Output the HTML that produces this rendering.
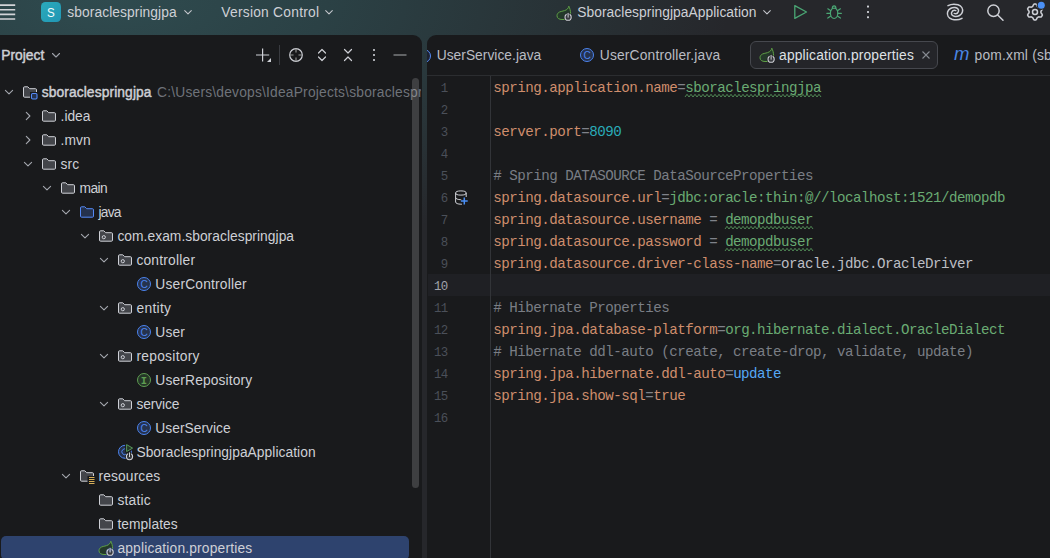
<!DOCTYPE html>
<html lang="en"><head><meta charset="utf-8"><title>sboraclespringjpa – application.properties</title>
<style>
html,body{margin:0;padding:0}
body{width:1050px;height:558px;overflow:hidden;position:relative;background:#26282b;font-family:"Liberation Sans",sans-serif;font-size:13.800px;color:#ced0d6;letter-spacing:.05px}
.bgg{position:absolute;left:0;top:0;width:1050px;height:558px;background:
 radial-gradient(ellipse 620px 260px at 110px 0px, #2f4b4f 0%, #2b4145 35%, rgba(38,40,44,0) 100%), #26272b}
.tb{position:absolute;left:0;top:0;width:1050px;height:35px}
.tb span,.hd span,.tabs span{position:absolute;white-space:nowrap}
.tb svg,.hd svg,.tabs svg{position:absolute;overflow:visible}
.proj{position:absolute;left:0;top:35px;width:422px;height:523px;background:#191a1c;border-top-right-radius:9px;overflow:hidden}
.ed{position:absolute;left:427px;top:35px;width:623px;height:523px;background:#191a1c;border-top-left-radius:9px;overflow:hidden}
.hd{position:absolute;left:0;top:0;width:422px;height:40px}
.row{position:absolute;left:0;width:440px;height:24px}
.row.sel{background:#2e436e;border-radius:5px;left:1px;width:408px}
.row.sel>span{margin-left:-1px}
.row span{position:absolute;white-space:nowrap}
.cv{top:4px;width:16px;height:16px}
.icw{top:4px;width:16px;height:16px}
.ic,.chev{width:16px;height:16px;display:block;overflow:visible}
.lbl{top:.5px;line-height:24px}
b{font-weight:400;-webkit-text-stroke:.45px currentColor;position:static}
.path{position:static!important;color:#6f737a;margin-left:5.400px;letter-spacing:.2px}
.rowclip{position:absolute;left:0;top:0;width:421px;height:558px;overflow:hidden}
.thumb{position:absolute;left:412px;top:43px;width:7px;height:410px;border-radius:4px;background:rgba(255,255,255,.165)}
.tabs{position:absolute;left:0;top:0;width:623px;height:40px;border-bottom:1px solid #2b2d30}
.ln{position:absolute;left:0;width:623px;height:22px;font-family:"Liberation Mono",monospace;letter-spacing:0}
.ln.cur{background:linear-gradient(90deg,#191a1c 1px,#1f2024 1px)}
.no{position:absolute;right:602.400px;top:1.700px;line-height:22px;font-size:12.4px;letter-spacing:-.69px;color:#4b5059}
.cur .no{color:#a1a3ab}
.cd{position:absolute;left:66.3px;top:1.2px;line-height:22px;font-size:14.2px;letter-spacing:-.52px;white-space:pre}
.gl{position:absolute;left:63px;top:41px;width:1px;height:482px;background:#323438;z-index:3}
.k{color:#cf8e6d}.e{color:#7f828a}.v{color:#6aab73}.n{color:#2aacb8}.c{color:#7a7e85}.t{color:#bcbec4}.u{color:#56a8f5}
.wv{position:absolute;top:18.300px;height:4px;overflow:visible}
</style></head><body>
<div class="bgg"></div>
<div class="tb">
 <svg style="left:0;top:0" width="20" height="24"><path d="M0 5.100h15.200M0 9.750h15.200M0 14.400h15.200M0 19h15.200" stroke="#d2d4d8" stroke-width="1.600"/></svg>
 <svg style="left:41px;top:2px" width="20" height="20"><defs><linearGradient id="sg" x1="0" y1="0" x2="1" y2="1"><stop offset="0" stop-color="#2baabb"/><stop offset="1" stop-color="#2196b4"/></linearGradient></defs><rect width="20" height="20" rx="4.5" fill="url(#sg)"/><text transform="translate(10 14.900) scale(.86 1)" text-anchor="middle" font-family="Liberation Sans, sans-serif" font-size="13.500" fill="#f2fbfc">S</text></svg>
 <span style="left:67.3px;top:4.5px;line-height:16px"><span class="f" style="letter-spacing:0.077px">sboraclespringjpa</span></span>
 <svg style="left:180px;top:4px" width="16" height="16"><path d="M4.700 6.600 l3.300 3.300 l3.300-3.300" fill="none" stroke="#c4c6cc" stroke-width="1.050" stroke-linecap="round" stroke-linejoin="round"/></svg>
 <span style="left:221.300px;top:4.5px;line-height:16px"><span class="f" style="letter-spacing:0.246px">Version Control</span></span>
 <svg style="left:321px;top:4px" width="16" height="16"><path d="M4.700 6.600 l3.300 3.300 l3.300-3.300" fill="none" stroke="#c4c6cc" stroke-width="1.050" stroke-linecap="round" stroke-linejoin="round"/></svg>
 <span style="left:555.5px;top:4.5px;width:16px;height:16px"><svg class="ic" viewBox="0 0 16 16"><path d="M12.8 1.2 C12.400 3.400 11 4.800 8.600 5.600 C6.500 6.300 3.800 6.400 2.300 7.800 C1.300 8.800 1 9.800 1 10.800 C1 13.200 3.200 14.500 6 14.500 L9 14.500 C12 14.200 14.600 11.700 14.600 8.500 C14.600 5.700 13.800 3.200 12.800 1.200 Z" fill="#24392a" stroke="#5fa047" stroke-width="1" stroke-linejoin="round"/><circle cx="12.100" cy="12.200" r="4.300" fill="#222629"/><circle cx="12.100" cy="12.200" r="3.100" fill="#3a3c40" stroke="#ced0d6" stroke-width="1.100"/><path d="M12.100 7.600v4.300" stroke="#222629" stroke-width="2.800"/><path d="M12.100 8.400v3.700" stroke="#ced0d6" stroke-width="1.100" stroke-linecap="round"/></svg></span>
 <span style="left:577.3px;top:4.5px;line-height:16px"><span class="f" style="letter-spacing:0.046px">SboraclespringjpaApplication</span></span>
 <svg style="left:759px;top:4px" width="16" height="16"><path d="M4.700 6.600 l3.300 3.300 l3.300-3.300" fill="none" stroke="#c4c6cc" stroke-width="1.050" stroke-linecap="round" stroke-linejoin="round"/></svg>
 <svg style="left:792px;top:4px" width="16" height="16"><path d="M2.8 1.6 v12.8 l11.7-6.4 z" fill="none" stroke="#4aa674" stroke-width="1.3" stroke-linejoin="round"/></svg>
 <svg style="left:826px;top:4px" width="16" height="16"><g fill="none" stroke="#4aa674" stroke-width="1.2" stroke-linecap="round"><ellipse cx="8.1" cy="9.3" rx="3.7" ry="5.2"/><path d="M6.3 4.4 a1.8 2.6 0 0 1 3.6 0"/><path d="M4.8 6.7 l-3-1.900 M11.400 6.700 l3-1.900 M4.400 9.300 h-3.600 M11.800 9.300 h3.600 M4.800 12.100 l-3 2 M11.400 12.100 l3 2"/></g></svg>
 <svg style="left:860px;top:4px" width="16" height="16"><rect x="7" y="1.6" width="2" height="2" rx=".6" fill="#ced0d6"/><rect x="7" y="6.900" width="2" height="2" rx=".6" fill="#ced0d6"/><rect x="7" y="12.200" width="2" height="2" rx=".6" fill="#ced0d6"/></svg>
 <svg style="left:946px;top:2.900px" width="18" height="18"><g transform="translate(9 9)" fill="none" stroke="#ced0d6" stroke-width="1.500" stroke-linecap="round"><path d="M-7 -6.3 C-4 -7.900 0 -8 3 -7.200 C6.500 -6.100 8.200 -3 7.400 0 C6.600 3 3 4.800 0 4.400 C-2.800 4 -4 2.400 -3.400 0.600 C-2.800 -1.200 -1 -2 0.800 -1.400"/><path transform="rotate(180)" d="M-7 -6.3 C-4 -7.900 0 -8 3 -7.200 C6.500 -6.100 8.200 -3 7.400 0 C6.600 3 3 4.800 0 4.400 C-2.800 4 -4 2.400 -3.400 0.600 C-2.800 -1.200 -1 -2 0.800 -1.400"/></g></svg>
 <svg style="left:986px;top:3px" width="18" height="18"><circle cx="7.500" cy="7.700" r="5.700" fill="none" stroke="#ced0d6" stroke-width="1.500"/><path d="M11.700 12 l5.300 5.200" stroke="#ced0d6" stroke-width="1.500" stroke-linecap="round"/></svg>
 <svg style="left:1026px;top:3px" width="18" height="18"><path d="M15.0 9.0L14.9 9.8L15.8 10.8L16.4 12.1L15.9 13.0L15.3 13.9L13.9 13.9L12.7 13.8L12.0 14.2L11.3 14.5L10.8 15.8L10.0 16.9L9.0 17.0L8.0 16.9L7.2 15.8L6.7 14.5L6.0 14.2L5.3 13.8L4.1 13.9L2.7 13.9L2.1 13.0L1.6 12.1L2.2 10.8L3.1 9.8L3.0 9.0L3.1 8.2L2.2 7.2L1.6 5.9L2.1 5.0L2.7 4.1L4.1 4.1L5.3 4.2L6.0 3.8L6.7 3.5L7.2 2.2L8.0 1.1L9.0 1.0L10.0 1.1L10.8 2.2L11.3 3.5L12.0 3.8L12.7 4.2L13.9 4.1L15.3 4.1L15.9 5.0L16.4 5.9L15.8 7.2L14.9 8.2Z" fill="none" stroke="#ced0d6" stroke-width="1.500" stroke-linejoin="round"/><circle cx="9" cy="9" r="2.500" fill="none" stroke="#ced0d6" stroke-width="1.500"/><circle cx="15.300" cy="2.300" r="4.600" fill="#27282c"/><circle cx="15.300" cy="2.300" r="3.500" fill="#4a8ff5"/></svg>
</div>
<div class="proj">
 <div class="hd">
  <span style="left:1.2px;top:12.5px;line-height:16px"><b style="letter-spacing:0.016px">Project</b></span>
  <svg style="left:48px;top:12px" width="16" height="16"><path d="M4.5 6.5 l3.5 3.5 l3.5-3.5" fill="none" stroke="#9da0a8" stroke-width="1.1" stroke-linecap="round" stroke-linejoin="round"/></svg>
  <svg style="left:255px;top:12px" width="18" height="16"><path d="M7.600 1.400v13.200M1 8h13.200" stroke="#ced0d6" stroke-width="1.200"/><path d="M16 11v4h-4z" fill="#ced0d6"/></svg>
  <div style="position:absolute;left:279px;top:10px;width:1px;height:20px;background:#393b40"></div>
  <svg style="left:288px;top:12px" width="16" height="16"><circle cx="8" cy="8" r="6.3" fill="none" stroke="#ced0d6" stroke-width="1.2"/><path d="M8 1.500v4M8 10.500v4M1.500 8h4M10.500 8h4" stroke="#9a9c9a" stroke-width="1.1"/></svg>
  <svg style="left:314px;top:12px" width="16" height="16"><path d="M4.500 6 l3.500-3.500 l3.500 3.500M4.500 10 l3.500 3.500 l3.500-3.500" fill="none" stroke="#ced0d6" stroke-width="1.2" stroke-linecap="round" stroke-linejoin="round"/></svg>
  <svg style="left:340px;top:12px" width="16" height="16"><path d="M4.500 2.500 l3.500 3.500 l3.500-3.500M4.500 13.500 l3.500-3.500 l3.500 3.500" fill="none" stroke="#ced0d6" stroke-width="1.2" stroke-linecap="round" stroke-linejoin="round"/></svg>
  <svg style="left:366px;top:12px" width="16" height="16"><circle cx="8" cy="3" r="1.1" fill="#ced0d6"/><circle cx="8" cy="8" r="1.1" fill="#ced0d6"/><circle cx="8" cy="13" r="1.1" fill="#ced0d6"/></svg>
  <svg style="left:392px;top:12px" width="16" height="16"><path d="M1.500 8h13" stroke="#a9abae" stroke-width="1.2"/></svg>
 </div>
 <div class="rowclip" style="top:-35px;left:0">
 <div class="row" style="top:80px"><span class="cv" style="left:1.10px"><svg class="chev" viewBox="0 0 16 16"><path d="M4.4 6.3 l3.6 3.6 l3.6-3.6" fill="none" stroke="#a4a7ae" stroke-width="1.1" stroke-linecap="round" stroke-linejoin="round"/></svg></span><span class="icw" style="left:22.15px"><svg class="ic" viewBox="0 0 16 16"><path d="M1.5 3.900 a1.100 1.100 0 0 1 1.100-1.100 h3.200 l1.900 1.900 h5.700 a1.100 1.100 0 0 1 1.100 1.100 v6.300 a1.100 1.100 0 0 1-1.100 1.100 h-10.800 a1.100 1.100 0 0 1-1.100-1.100 z" fill="#43454a" stroke="#ced0d6" stroke-width="1"/><rect x="8" y="8" width="8" height="8" fill="#191a1c"/><rect x="9.5" y="9.5" width="5.5" height="5.5" rx="1.2" fill="#25324d" stroke="#548af7" stroke-width="1.1"/></svg></span><span class="lbl" style="left:41.65px"><b style="letter-spacing:0.108px">sboraclespringjpa</b><span class="path">C:\Users\devops\IdeaProjects\sboraclespringjpa</span></span></div>
<div class="row" style="top:104px"><span class="cv" style="left:20.05px"><svg class="chev" viewBox="0 0 16 16"><path d="M6.3 4.4 l3.6 3.6 l-3.6 3.6" fill="none" stroke="#a4a7ae" stroke-width="1.1" stroke-linecap="round" stroke-linejoin="round"/></svg></span><span class="icw" style="left:41.10px"><svg class="ic" viewBox="0 0 16 16"><path d="M1.5 3.900 a1.100 1.100 0 0 1 1.100-1.100 h3.200 l1.900 1.900 h5.700 a1.100 1.100 0 0 1 1.100 1.100 v6.300 a1.100 1.100 0 0 1-1.100 1.100 h-10.800 a1.100 1.100 0 0 1-1.100-1.100 z" fill="#43454a" stroke="#ced0d6" stroke-width="1"/></svg></span><span class="lbl" style="left:60.60px"><span class="f" style="letter-spacing:-0.036px">.idea</span></span></div>
<div class="row" style="top:128px"><span class="cv" style="left:20.05px"><svg class="chev" viewBox="0 0 16 16"><path d="M6.3 4.4 l3.6 3.6 l-3.6 3.6" fill="none" stroke="#a4a7ae" stroke-width="1.1" stroke-linecap="round" stroke-linejoin="round"/></svg></span><span class="icw" style="left:41.10px"><svg class="ic" viewBox="0 0 16 16"><path d="M1.5 3.900 a1.100 1.100 0 0 1 1.100-1.100 h3.200 l1.900 1.900 h5.700 a1.100 1.100 0 0 1 1.100 1.100 v6.300 a1.100 1.100 0 0 1-1.100 1.100 h-10.800 a1.100 1.100 0 0 1-1.100-1.100 z" fill="#43454a" stroke="#ced0d6" stroke-width="1"/></svg></span><span class="lbl" style="left:60.60px"><span class="f" style="letter-spacing:0.058px">.mvn</span></span></div>
<div class="row" style="top:152px"><span class="cv" style="left:20.05px"><svg class="chev" viewBox="0 0 16 16"><path d="M4.4 6.3 l3.6 3.6 l3.6-3.6" fill="none" stroke="#a4a7ae" stroke-width="1.1" stroke-linecap="round" stroke-linejoin="round"/></svg></span><span class="icw" style="left:41.10px"><svg class="ic" viewBox="0 0 16 16"><path d="M1.5 3.900 a1.100 1.100 0 0 1 1.100-1.100 h3.200 l1.900 1.900 h5.700 a1.100 1.100 0 0 1 1.100 1.100 v6.300 a1.100 1.100 0 0 1-1.100 1.100 h-10.800 a1.100 1.100 0 0 1-1.100-1.100 z" fill="#43454a" stroke="#ced0d6" stroke-width="1"/></svg></span><span class="lbl" style="left:60.60px"><span class="f" style="letter-spacing:0.104px">src</span></span></div>
<div class="row" style="top:176px"><span class="cv" style="left:39.00px"><svg class="chev" viewBox="0 0 16 16"><path d="M4.4 6.3 l3.6 3.6 l3.6-3.6" fill="none" stroke="#a4a7ae" stroke-width="1.1" stroke-linecap="round" stroke-linejoin="round"/></svg></span><span class="icw" style="left:60.05px"><svg class="ic" viewBox="0 0 16 16"><path d="M1.5 3.900 a1.100 1.100 0 0 1 1.100-1.100 h3.200 l1.900 1.900 h5.700 a1.100 1.100 0 0 1 1.100 1.100 v6.300 a1.100 1.100 0 0 1-1.100 1.100 h-10.800 a1.100 1.100 0 0 1-1.100-1.100 z" fill="#43454a" stroke="#ced0d6" stroke-width="1"/></svg></span><span class="lbl" style="left:79.55px"><span class="f" style="letter-spacing:-0.577px">main</span></span></div>
<div class="row" style="top:200px"><span class="cv" style="left:57.95px"><svg class="chev" viewBox="0 0 16 16"><path d="M4.4 6.3 l3.6 3.6 l3.6-3.6" fill="none" stroke="#a4a7ae" stroke-width="1.1" stroke-linecap="round" stroke-linejoin="round"/></svg></span><span class="icw" style="left:79.00px"><svg class="ic" viewBox="0 0 16 16"><path d="M1.5 3.900 a1.100 1.100 0 0 1 1.100-1.100 h3.200 l1.900 1.900 h5.700 a1.100 1.100 0 0 1 1.100 1.100 v6.300 a1.100 1.100 0 0 1-1.100 1.100 h-10.800 a1.100 1.100 0 0 1-1.100-1.100 z" fill="#25324d" stroke="#548af7" stroke-width="1"/></svg></span><span class="lbl" style="left:98.50px"><span class="f" style="letter-spacing:-0.779px">java</span></span></div>
<div class="row" style="top:224px"><span class="cv" style="left:76.90px"><svg class="chev" viewBox="0 0 16 16"><path d="M4.4 6.3 l3.6 3.6 l3.6-3.6" fill="none" stroke="#a4a7ae" stroke-width="1.1" stroke-linecap="round" stroke-linejoin="round"/></svg></span><span class="icw" style="left:97.95px"><svg class="ic" viewBox="0 0 16 16"><path d="M1.5 3.900 a1.100 1.100 0 0 1 1.100-1.100 h3.200 l1.900 1.900 h5.700 a1.100 1.100 0 0 1 1.100 1.100 v6.300 a1.100 1.100 0 0 1-1.100 1.100 h-10.800 a1.100 1.100 0 0 1-1.100-1.100 z" fill="#43454a" stroke="#ced0d6" stroke-width="1"/><circle cx="5.800" cy="9.200" r="1.600" fill="none" stroke="#ced0d6" stroke-width="1"/></svg></span><span class="lbl" style="left:117.45px"><span class="f" style="letter-spacing:0.039px">com.exam.sboraclespringjpa</span></span></div>
<div class="row" style="top:248px"><span class="cv" style="left:95.85px"><svg class="chev" viewBox="0 0 16 16"><path d="M4.4 6.3 l3.6 3.6 l3.6-3.6" fill="none" stroke="#a4a7ae" stroke-width="1.1" stroke-linecap="round" stroke-linejoin="round"/></svg></span><span class="icw" style="left:116.90px"><svg class="ic" viewBox="0 0 16 16"><path d="M1.5 3.900 a1.100 1.100 0 0 1 1.100-1.100 h3.200 l1.900 1.900 h5.700 a1.100 1.100 0 0 1 1.100 1.100 v6.300 a1.100 1.100 0 0 1-1.100 1.100 h-10.800 a1.100 1.100 0 0 1-1.100-1.100 z" fill="#43454a" stroke="#ced0d6" stroke-width="1"/><circle cx="5.800" cy="9.200" r="1.600" fill="none" stroke="#ced0d6" stroke-width="1"/></svg></span><span class="lbl" style="left:136.40px"><span class="f" style="letter-spacing:0.206px">controller</span></span></div>
<div class="row" style="top:272px"><span class="icw" style="left:135.85px"><svg class="ic" viewBox="0 0 16 16"><circle cx="8" cy="8" r="6.5" fill="#25324d" stroke="#4c84ee" stroke-width="1"/><text x="8.1" y="11.6" text-anchor="middle" font-family="Liberation Sans, sans-serif" font-size="10.2" fill="#4c84ee">C</text></svg></span><span class="lbl" style="left:155.35px"><span class="f" style="letter-spacing:0.181px">UserController</span></span></div>
<div class="row" style="top:296px"><span class="cv" style="left:95.85px"><svg class="chev" viewBox="0 0 16 16"><path d="M4.4 6.3 l3.6 3.6 l3.6-3.6" fill="none" stroke="#a4a7ae" stroke-width="1.1" stroke-linecap="round" stroke-linejoin="round"/></svg></span><span class="icw" style="left:116.90px"><svg class="ic" viewBox="0 0 16 16"><path d="M1.5 3.900 a1.100 1.100 0 0 1 1.100-1.100 h3.200 l1.900 1.900 h5.700 a1.100 1.100 0 0 1 1.100 1.100 v6.300 a1.100 1.100 0 0 1-1.100 1.100 h-10.800 a1.100 1.100 0 0 1-1.100-1.100 z" fill="#43454a" stroke="#ced0d6" stroke-width="1"/><circle cx="5.800" cy="9.200" r="1.600" fill="none" stroke="#ced0d6" stroke-width="1"/></svg></span><span class="lbl" style="left:136.40px"><span class="f" style="letter-spacing:0.324px">entity</span></span></div>
<div class="row" style="top:320px"><span class="icw" style="left:135.85px"><svg class="ic" viewBox="0 0 16 16"><circle cx="8" cy="8" r="6.5" fill="#25324d" stroke="#4c84ee" stroke-width="1"/><text x="8.1" y="11.6" text-anchor="middle" font-family="Liberation Sans, sans-serif" font-size="10.2" fill="#4c84ee">C</text></svg></span><span class="lbl" style="left:155.35px"><span class="f" style="letter-spacing:0.122px">User</span></span></div>
<div class="row" style="top:344px"><span class="cv" style="left:95.85px"><svg class="chev" viewBox="0 0 16 16"><path d="M4.4 6.3 l3.6 3.6 l3.6-3.6" fill="none" stroke="#a4a7ae" stroke-width="1.1" stroke-linecap="round" stroke-linejoin="round"/></svg></span><span class="icw" style="left:116.90px"><svg class="ic" viewBox="0 0 16 16"><path d="M1.5 3.900 a1.100 1.100 0 0 1 1.100-1.100 h3.200 l1.900 1.900 h5.700 a1.100 1.100 0 0 1 1.100 1.100 v6.300 a1.100 1.100 0 0 1-1.100 1.100 h-10.800 a1.100 1.100 0 0 1-1.100-1.100 z" fill="#43454a" stroke="#ced0d6" stroke-width="1"/><circle cx="5.800" cy="9.200" r="1.600" fill="none" stroke="#ced0d6" stroke-width="1"/></svg></span><span class="lbl" style="left:136.40px"><span class="f" style="letter-spacing:0.280px">repository</span></span></div>
<div class="row" style="top:368px"><span class="icw" style="left:135.85px"><svg class="ic" viewBox="0 0 16 16"><circle cx="8" cy="8" r="6.5" fill="#253627" stroke="#5f9e52" stroke-width="1"/><text x="8" y="11.500" text-anchor="middle" font-family="Liberation Mono, monospace" font-weight="bold" font-size="10.500" fill="#5f9e52">I</text></svg></span><span class="lbl" style="left:155.35px"><span class="f" style="letter-spacing:0.140px">UserRepository</span></span></div>
<div class="row" style="top:392px"><span class="cv" style="left:95.85px"><svg class="chev" viewBox="0 0 16 16"><path d="M4.4 6.3 l3.6 3.6 l3.6-3.6" fill="none" stroke="#a4a7ae" stroke-width="1.1" stroke-linecap="round" stroke-linejoin="round"/></svg></span><span class="icw" style="left:116.90px"><svg class="ic" viewBox="0 0 16 16"><path d="M1.5 3.900 a1.100 1.100 0 0 1 1.100-1.100 h3.200 l1.900 1.900 h5.700 a1.100 1.100 0 0 1 1.100 1.100 v6.300 a1.100 1.100 0 0 1-1.100 1.100 h-10.800 a1.100 1.100 0 0 1-1.100-1.100 z" fill="#43454a" stroke="#ced0d6" stroke-width="1"/><circle cx="5.800" cy="9.200" r="1.600" fill="none" stroke="#ced0d6" stroke-width="1"/></svg></span><span class="lbl" style="left:136.40px"><span class="f" style="letter-spacing:-0.121px">service</span></span></div>
<div class="row" style="top:416px"><span class="icw" style="left:135.85px"><svg class="ic" viewBox="0 0 16 16"><circle cx="8" cy="8" r="6.5" fill="#25324d" stroke="#4c84ee" stroke-width="1"/><text x="8.1" y="11.6" text-anchor="middle" font-family="Liberation Sans, sans-serif" font-size="10.2" fill="#4c84ee">C</text></svg></span><span class="lbl" style="left:155.35px"><span class="f" style="letter-spacing:0.014px">UserService</span></span></div>
<div class="row" style="top:440px"><span class="icw" style="left:116.90px"><svg class="ic" viewBox="0 0 16 16"><circle cx="8" cy="7.8" r="6.5" fill="#25324d" stroke="#4c84ee" stroke-width="1"/><path d="M9.2 10.3 a2.9 2.9 0 1 1 0-5" fill="none" stroke="#4c84ee" stroke-width="1"/><path d="M9.6 0.6 l6 3.500 l-6 3.500 z" fill="#253627" stroke="#191a1c" stroke-width="3" stroke-linejoin="round"/><path d="M9.6 0.6 l6 3.500 l-6 3.500 z" fill="#253627" stroke="#57965c" stroke-width="1" stroke-linejoin="round"/><circle cx="12.500" cy="12.600" r="4.300" fill="#191a1c"/><circle cx="12.500" cy="12.600" r="3.100" fill="#3a3c40" stroke="#ced0d6" stroke-width="1.100"/><path d="M12.500 8v4.300" stroke="#191a1c" stroke-width="2.800"/><path d="M12.500 8.800v3.700" stroke="#ced0d6" stroke-width="1.100" stroke-linecap="round"/></svg></span><span class="lbl" style="left:136.40px"><span class="f" style="letter-spacing:0.046px">SboraclespringjpaApplication</span></span></div>
<div class="row" style="top:464px"><span class="cv" style="left:57.95px"><svg class="chev" viewBox="0 0 16 16"><path d="M4.4 6.3 l3.6 3.6 l3.6-3.6" fill="none" stroke="#a4a7ae" stroke-width="1.1" stroke-linecap="round" stroke-linejoin="round"/></svg></span><span class="icw" style="left:79.00px"><svg class="ic" viewBox="0 0 16 16"><path d="M1.5 3.900 a1.100 1.100 0 0 1 1.100-1.100 h3.200 l1.900 1.900 h5.700 a1.100 1.100 0 0 1 1.100 1.100 v6.300 a1.100 1.100 0 0 1-1.100 1.100 h-10.800 a1.100 1.100 0 0 1-1.100-1.100 z" fill="#43454a" stroke="#ced0d6" stroke-width="1"/><rect x="8.5" y="8" width="8" height="8" fill="#191a1c"/><path d="M10 9.5h5.5M10 11.5h5.5M10 13.5h5.5M10 15.5h5.5" stroke="#d6ae58" stroke-width="1"/></svg></span><span class="lbl" style="left:98.50px"><span class="f" style="letter-spacing:0.128px">resources</span></span></div>
<div class="row" style="top:488px"><span class="icw" style="left:97.95px"><svg class="ic" viewBox="0 0 16 16"><path d="M1.5 3.900 a1.100 1.100 0 0 1 1.100-1.100 h3.200 l1.900 1.900 h5.700 a1.100 1.100 0 0 1 1.100 1.100 v6.300 a1.100 1.100 0 0 1-1.100 1.100 h-10.800 a1.100 1.100 0 0 1-1.100-1.100 z" fill="#43454a" stroke="#ced0d6" stroke-width="1"/></svg></span><span class="lbl" style="left:117.45px"><span class="f" style="letter-spacing:0.179px">static</span></span></div>
<div class="row" style="top:512px"><span class="icw" style="left:97.95px"><svg class="ic" viewBox="0 0 16 16"><path d="M1.5 3.900 a1.100 1.100 0 0 1 1.100-1.100 h3.200 l1.900 1.900 h5.700 a1.100 1.100 0 0 1 1.100 1.100 v6.300 a1.100 1.100 0 0 1-1.100 1.100 h-10.800 a1.100 1.100 0 0 1-1.100-1.100 z" fill="#43454a" stroke="#ced0d6" stroke-width="1"/></svg></span><span class="lbl" style="left:117.45px"><span class="f" style="letter-spacing:0.060px">templates</span></span></div>
<div class="row sel" style="top:536px"><span class="icw" style="left:97.95px"><svg class="ic" viewBox="0 0 16 16"><path d="M12.8 1.2 C12.400 3.400 11 4.800 8.600 5.600 C6.500 6.300 3.800 6.400 2.300 7.800 C1.300 8.800 1 9.800 1 10.800 C1 13.200 3.200 14.500 6 14.500 L9 14.500 C12 14.200 14.600 11.700 14.600 8.500 C14.600 5.700 13.800 3.200 12.800 1.200 Z" fill="#24392a" stroke="#5fa047" stroke-width="1" stroke-linejoin="round"/><circle cx="12.100" cy="12.200" r="4.300" fill="#2e436e"/><circle cx="12.100" cy="12.200" r="3.100" fill="#3a3c40" stroke="#ced0d6" stroke-width="1.100"/><path d="M12.100 7.600v4.300" stroke="#2e436e" stroke-width="2.800"/><path d="M12.100 8.400v3.700" stroke="#ced0d6" stroke-width="1.100" stroke-linecap="round"/></svg></span><span class="lbl" style="left:117.45px"><span class="f" style="letter-spacing:0.169px">application.properties</span></span></div>
 </div>
 <div class="thumb"></div>
</div>
<div class="ed">
 <div class="tabs">
  <svg style="left:-11.500px;top:12.500px" width="16" height="16"><circle cx="8" cy="8" r="6.5" fill="#1d2231" stroke="#548af7" stroke-width="1"/></svg>
  <span style="left:9.700px;top:12.5px;line-height:16px;color:#b9bcc3"><span class="f" style="letter-spacing:0.020px">UserService.java</span></span>
  <span style="left:152px;top:12px;width:16px;height:16px"><svg class="ic" viewBox="0 0 16 16"><circle cx="8" cy="8" r="6.5" fill="#25324d" stroke="#4c84ee" stroke-width="1"/><text x="8.1" y="11.6" text-anchor="middle" font-family="Liberation Sans, sans-serif" font-size="10.2" fill="#4c84ee">C</text></svg></span>
  <span style="left:172.800px;top:12.5px;line-height:16px;color:#b9bcc3"><span class="f" style="letter-spacing:0.170px">UserController.java</span></span>
  <div style="position:absolute;left:323px;top:6px;width:188px;height:28px;border:1px solid #46484e;border-radius:6px;background:#242529;box-sizing:border-box"></div>
  <span style="left:331.500px;top:12px;width:16px;height:16px"><svg class="ic" viewBox="0 0 16 16"><path d="M12.8 1.2 C12.400 3.400 11 4.800 8.600 5.600 C6.500 6.300 3.800 6.400 2.300 7.800 C1.300 8.800 1 9.800 1 10.800 C1 13.200 3.200 14.500 6 14.500 L9 14.500 C12 14.200 14.600 11.700 14.600 8.500 C14.600 5.700 13.800 3.200 12.800 1.200 Z" fill="#24392a" stroke="#5fa047" stroke-width="1" stroke-linejoin="round"/><circle cx="12.100" cy="12.200" r="4.300" fill="#1e1f22"/><circle cx="12.100" cy="12.200" r="3.100" fill="#3a3c40" stroke="#ced0d6" stroke-width="1.100"/><path d="M12.100 7.600v4.300" stroke="#1e1f22" stroke-width="2.800"/><path d="M12.100 8.400v3.700" stroke="#ced0d6" stroke-width="1.100" stroke-linecap="round"/></svg></span>
  <span style="left:352.100px;top:12.5px;line-height:16px;color:#dfe1e5"><span class="f" style="letter-spacing:0.169px">application.properties</span></span>
  <svg style="left:491px;top:12px" width="16" height="16"><path d="M4.500 4.500l7 7M11.500 4.500l-7 7" stroke="#868a91" stroke-width="1.1"/></svg>
  <span style="left:526.900px;top:9.200px;line-height:20px;font-size:18.500px;font-style:italic;color:#4a86e4;letter-spacing:0">m</span>
  <span style="left:547.6px;top:12.5px;line-height:16px;color:#b9bcc3;letter-spacing:.2px">pom.xml (sboraclespringjpa)</span>
 </div>
 <div class="gl"></div>
 <div style="position:absolute;left:0;top:-35px;width:623px;height:558px">
 <div class="ln" style="top:76px"><span class="no">1</span><span class="cd"><span class="k">spring.application.name</span><span class="e">=</span><span class="v w">sboraclespringjpa</span></span><svg class="wv" style="left:258.3px" width="136" height="4"><polyline points="0,3.0 2,0.3 4,3.0 6,0.3 8,3.0 10,0.3 12,3.0 14,0.3 16,3.0 18,0.3 20,3.0 22,0.3 24,3.0 26,0.3 28,3.0 30,0.3 32,3.0 34,0.3 36,3.0 38,0.3 40,3.0 42,0.3 44,3.0 46,0.3 48,3.0 50,0.3 52,3.0 54,0.3 56,3.0 58,0.3 60,3.0 62,0.3 64,3.0 66,0.3 68,3.0 70,0.3 72,3.0 74,0.3 76,3.0 78,0.3 80,3.0 82,0.3 84,3.0 86,0.3 88,3.0 90,0.3 92,3.0 94,0.3 96,3.0 98,0.3 100,3.0 102,0.3 104,3.0 106,0.3 108,3.0 110,0.3 112,3.0 114,0.3 116,3.0 118,0.3 120,3.0 122,0.3 124,3.0 126,0.3 128,3.0 130,0.3 132,3.0 134,0.3 136,3.0" fill="none" stroke="#57965c" stroke-width="0.9"/></svg></div>
<div class="ln" style="top:98px"><span class="no">2</span><span class="cd"></span></div>
<div class="ln" style="top:120px"><span class="no">3</span><span class="cd"><span class="k">server.port</span><span class="e">=</span><span class="n">8090</span></span></div>
<div class="ln" style="top:142px"><span class="no">4</span><span class="cd"></span></div>
<div class="ln" style="top:164px"><span class="no">5</span><span class="cd"><span class="c"># Spring DATASOURCE DataSourceProperties</span></span></div>
<div class="ln" style="top:186px"><span class="no">6</span><span class="cd"><span class="k">spring.datasource.url</span><span class="e">=</span><span class="v">jdbc:oracle:thin:@//localhost:1521/demopdb</span></span></div>
<div class="ln" style="top:208px"><span class="no">7</span><span class="cd"><span class="k">spring.datasource.username</span><span class="e"> = </span><span class="v w">demopdbuser</span></span><svg class="wv" style="left:298.3px" width="88" height="4"><polyline points="0,3.0 2,0.3 4,3.0 6,0.3 8,3.0 10,0.3 12,3.0 14,0.3 16,3.0 18,0.3 20,3.0 22,0.3 24,3.0 26,0.3 28,3.0 30,0.3 32,3.0 34,0.3 36,3.0 38,0.3 40,3.0 42,0.3 44,3.0 46,0.3 48,3.0 50,0.3 52,3.0 54,0.3 56,3.0 58,0.3 60,3.0 62,0.3 64,3.0 66,0.3 68,3.0 70,0.3 72,3.0 74,0.3 76,3.0 78,0.3 80,3.0 82,0.3 84,3.0 86,0.3 88,3.0" fill="none" stroke="#57965c" stroke-width="0.9"/></svg></div>
<div class="ln" style="top:230px"><span class="no">8</span><span class="cd"><span class="k">spring.datasource.password</span><span class="e"> = </span><span class="v w">demopdbuser</span></span><svg class="wv" style="left:298.3px" width="88" height="4"><polyline points="0,3.0 2,0.3 4,3.0 6,0.3 8,3.0 10,0.3 12,3.0 14,0.3 16,3.0 18,0.3 20,3.0 22,0.3 24,3.0 26,0.3 28,3.0 30,0.3 32,3.0 34,0.3 36,3.0 38,0.3 40,3.0 42,0.3 44,3.0 46,0.3 48,3.0 50,0.3 52,3.0 54,0.3 56,3.0 58,0.3 60,3.0 62,0.3 64,3.0 66,0.3 68,3.0 70,0.3 72,3.0 74,0.3 76,3.0 78,0.3 80,3.0 82,0.3 84,3.0 86,0.3 88,3.0" fill="none" stroke="#57965c" stroke-width="0.9"/></svg></div>
<div class="ln" style="top:252px"><span class="no">9</span><span class="cd"><span class="k">spring.datasource.driver-class-name</span><span class="e">=</span><span class="t">oracle.jdbc.OracleDriver</span></span></div>
<div class="ln cur" style="top:274px"><span class="no">10</span><span class="cd"></span></div>
<div class="ln" style="top:296px"><span class="no">11</span><span class="cd"><span class="c"># Hibernate Properties</span></span></div>
<div class="ln" style="top:318px"><span class="no">12</span><span class="cd"><span class="k">spring.jpa.database-platform</span><span class="e">=</span><span class="v">org.hibernate.dialect.OracleDialect</span></span></div>
<div class="ln" style="top:340px"><span class="no">13</span><span class="cd"><span class="c"># Hibernate ddl-auto (create, create-drop, validate, update)</span></span></div>
<div class="ln" style="top:362px"><span class="no">14</span><span class="cd"><span class="k">spring.jpa.hibernate.ddl-auto</span><span class="e">=</span><span class="u">update</span></span></div>
<div class="ln" style="top:384px"><span class="no">15</span><span class="cd"><span class="k">spring.jpa.show-sql</span><span class="e">=</span><span class="k">true</span></span></div>
<div class="ln" style="top:406px"><span class="no">16</span><span class="cd"></span></div>
 <svg style="position:absolute;left:27.300px;top:189.500px;overflow:visible" width="15" height="16"><g fill="none" stroke="#ced0d6" stroke-width="1"><ellipse cx="6.900" cy="3" rx="5.300" ry="2.100"/><path d="M1.600 3v9c0 1.300 2.400 2.200 5.300 2.200h1M12.200 3v4M1.600 7.500c0 1.300 2.400 2.200 5.300 2.200h1"/></g><path d="M10.300 7.600v6.800M6.900 11h6.800" stroke="#191a1c" stroke-width="3.600"/><path d="M10.300 7.600v6.800M6.900 11h6.800" stroke="#4a8ff5" stroke-width="1.500"/></svg>
 </div>
</div>
</body></html>
